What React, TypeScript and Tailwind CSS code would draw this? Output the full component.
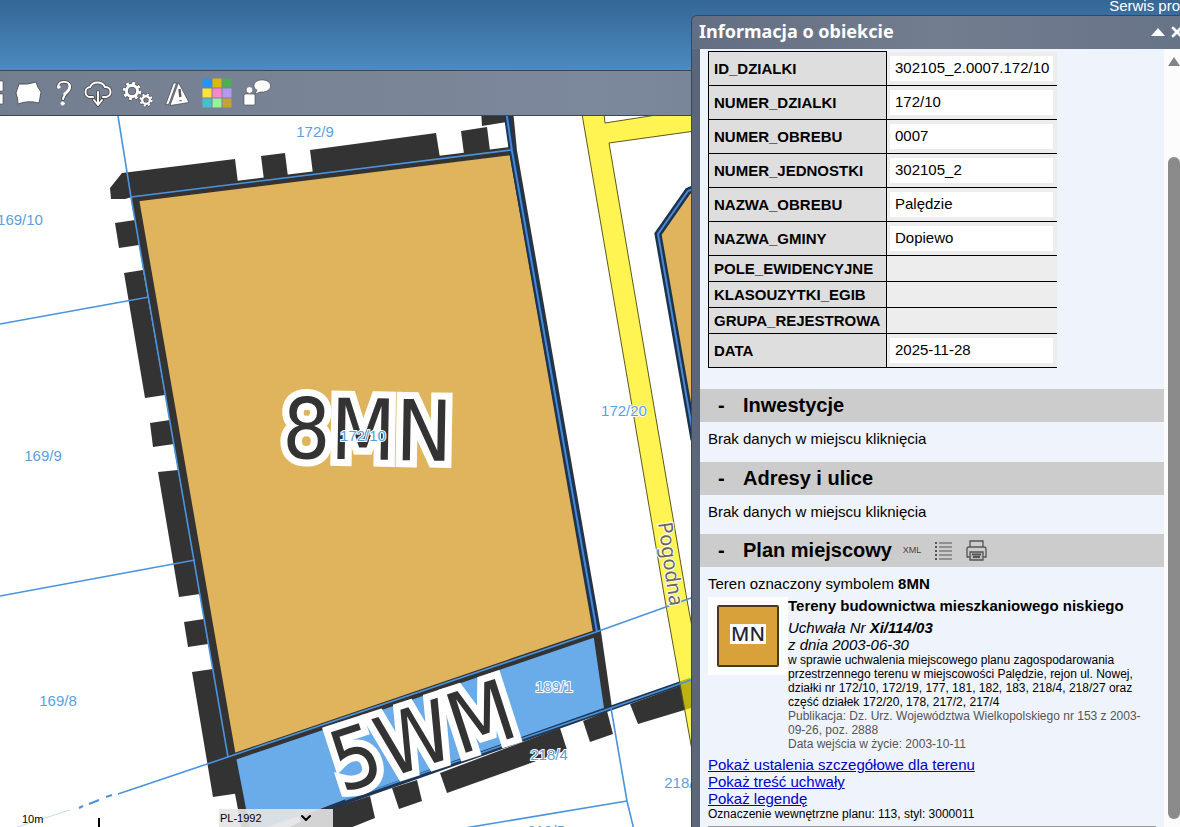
import React from 'react';
import { ChevronDown, X } from 'lucide-react';

interface Attribute {
  name: string;
  value?: string;
}

const attributes: Attribute[] = [
  { name: 'ID_DZIALKI', value: '302105_2.0007.172/10' },
  { name: 'NUMER_DZIALKI', value: '172/10' },
  { name: 'NUMER_OBREBU', value: '0007' },
  { name: 'NUMER_JEDNOSTKI', value: '302105_2' },
  { name: 'NAZWA_OBREBU', value: 'Palędzie' },
  { name: 'NAZWA_GMINY', value: 'Dopiewo' },
  { name: 'POLE_EWIDENCYJNE' },
  { name: 'KLASOUZYTKI_EGIB' },
  { name: 'GRUPA_REJESTROWA' },
  { name: 'DATA', value: '2025-11-28' },
];

const links = ['Pokaż ustalenia szczegółowe dla terenu', 'Pokaż treść uchwały', 'Pokaż legendę'];

// map geometry, in map pixels
const boundaryBlocks = [
  '110,188 122,173 235,159 238,183 132,197 125,199 111,199',
  '261,156 285,153 288,177 264,180',
  '310,150 436,133 440,158 313,174',
  '461,131 487,127 490,151 464,154',
  '481,110 505,110 507,122 482,126',
  '115,223 135,220 139,245 119,248',
  '124,273 143,270 165,395 145,398',
  '150,423 170,420 174,444 153,447',
  '158,472 178,470 200,594 179,597',
  '184,622 204,619 208,644 188,647',
  '192,672 213,669 232,757 240,793 213,797',
  '290,827 320,812 370,796 375,818 345,830 290,830',
  '392,788 417,780 422,801 399,809',
  '440,773 560,728 567,750 447,793',
  '583,721 607,711 613,734 590,742',
  '630,704 691,682 691,708 638,724',
];

const cadastralLines = [
  '118,116 131,197 228,757',
  '131,197 511,150',
  '0,324 149,297',
  '0,596 195,560',
  '118,794 228,757 596,632 691,598',
  '611,708 627,801 634,830',
  '465,828 627,801',
  '345,800 611,708 691,680',
];

const parcelLabels = [
  { x: 315, y: 137, text: '172/9' },
  { x: 20, y: 225, text: '169/10' },
  { x: 43, y: 461, text: '169/9' },
  { x: 58, y: 706, text: '169/8' },
  { x: 363, y: 441, text: '172/10' },
  { x: 624, y: 416, text: '172/20' },
  { x: 554, y: 692, text: '189/1' },
  { x: 549, y: 760, text: '218/4' },
  { x: 683, y: 788, text: '218/3' },
  { x: 546, y: 836, text: '218/5' },
];

const paletteCells = [
  '#2196f3', '#dcb80a', '#4caf50',
  '#ffe33c', '#ff85c8', '#b39af0',
  '#45c0cc', '#98f29a', '#c6a136',
];

const ParcelMap: React.FC = () => (
  <svg
    className="absolute inset-0 h-full w-full"
    viewBox="0 116 1180 711"
    preserveAspectRatio="xMinYMin slice"
    role="img"
    aria-label="Mapa działek"
  >
    <rect x="0" y="116" width="1180" height="711" fill="#fff" />

    {boundaryBlocks.map((points) => (
      <polygon key={points} points={points} fill="#333" />
    ))}

    {/* plan areas */}
    <polygon points="136,199 510,151 596,631 234,757" fill="#e0b45d" />
    <polygon points="234,757 596,633 608,708 245,835" fill="#6aacea" />
    <polyline points="135,199 232,757 246,830" fill="none" stroke="#333" strokeWidth="8" />
    <polyline points="132,198 511,151" fill="none" stroke="#333" strokeWidth="8" />
    <polyline points="509,110 513,151 597,632 608,708" fill="none" stroke="#333" strokeWidth="8" />
    <polyline points="230,758 597,633" fill="none" stroke="#333" strokeWidth="7" />
    <polyline points="300,819 345,802 608,709 691,680" fill="none" stroke="#1f3550" strokeWidth="5" />
    <polyline points="506,110 512,151 597,632" fill="none" stroke="#17365c" strokeWidth="6" />
    <polyline points="506,110 512,151 597,632" fill="none" stroke="#4a88d4" strokeWidth="2" />

    <polygon points="700,186 688,190 657,234 692,430" fill="#e0b45d" />
    <polyline points="700,186 688,191 658,234 694,440" fill="none" stroke="#1c3350" strokeWidth="7" />
    <polyline points="700,186 688,191 658,234 694,440" fill="none" stroke="#4a88d4" strokeWidth="2" />

    {/* road */}
    <polygon
      points="582,114 604,114 605,123 650,116 695,108 695,131 609,143 687,600 700,670 700,795 665,600 631,400"
      fill="#ffef00"
      fillOpacity="0.68"
      stroke="#5d5720"
      strokeWidth="1"
    />

    {cadastralLines.map((points) => (
      <polyline key={points} points={points} fill="none" stroke="#4a94de" strokeWidth="1.6" />
    ))}
    <path d="M79 808l4-2M89 804l10-4M106 797l6-2" stroke="#4a94de" strokeWidth="2" />
    <path d="M17 827L70 810" stroke="#c4dcf2" strokeWidth="1" />

    {/* area symbols */}
    <g
      fill="#333"
      stroke="#fff"
      strokeWidth="14"
      strokeMiterlimit="3"
      paintOrder="stroke"
      fontSize="84"
      fontFamily="'DejaVu Sans Condensed', 'DejaVu Sans', sans-serif"
    >
      <text transform="translate(282 458) rotate(1)">8MN</text>
      <text transform="translate(342 793) rotate(-18)">5WM</text>
    </g>
    <text
      transform="translate(658 523) rotate(82)"
      fontSize="20"
      fontFamily="'Noto Sans', sans-serif"
      fill="#6b6658"
      stroke="#fff"
      strokeWidth="2"
      paintOrder="stroke"
    >
      Pogodna
    </text>

    <g
      fontSize="15"
      fontFamily="'Liberation Sans', Arial, sans-serif"
      textAnchor="middle"
      fill="#5a9fe0"
      stroke="#fff"
      strokeWidth="2"
      paintOrder="stroke"
    >
      {parcelLabels.map(({ x, y, text }) => (
        <text key={text} x={x} y={y}>
          {text}
        </text>
      ))}
    </g>
  </svg>
);

const ToolButton: React.FC<{ label: string; className: string; children: React.ReactNode }> = ({
  label,
  className,
  children,
}) => (
  <button aria-label={label} className={`flex h-full shrink-0 items-center justify-center ${className}`}>
    {children}
  </button>
);

const Toolbar: React.FC = () => (
  <div className="flex h-[46px] items-stretch border-y border-[#3b4658] bg-linear-to-r from-[#747e91] via-[#7c889b] to-[#6c788c]">
    <ToolButton label="Warstwy" className="w-[9px] justify-start">
      <svg width="9" height="26" viewBox="0 0 9 26" fill="#fff" stroke="#444" strokeWidth="0.6">
        <path d="M-2 1h5v10h-5zM-2 14h5v10h-5z" />
      </svg>
    </ToolButton>
    <ToolButton label="Zaznacz obszar" className="w-10">
      <svg width="30" height="28" viewBox="0 0 30 28" fill="#fff" stroke="#444" strokeWidth="0.8">
        <path d="M5 5q9 1 17-2 1 5 5 10l-2 11q-11-3-21 1 0-6-2-11z" strokeLinejoin="round" />
      </svg>
    </ToolButton>
    <ToolButton label="Pomoc" className="w-[30px]">
      <svg width="20" height="28" viewBox="0 0 20 28" fill="none" stroke="#fff" strokeLinecap="round">
        <path d="M4 8C4 1 16 1 16 8c0 5-6 6-7 12" stroke="#444" strokeWidth="3.6" />
        <path d="M4 8C4 1 16 1 16 8c0 5-6 6-7 12" strokeWidth="2" />
        <path d="M15.500 6c1.500 5-3 7-5 9" strokeWidth="2.600" />
        <circle cx="4.6" cy="8" r="1.4" fill="#fff" strokeWidth="1" />
        <circle cx="8.600" cy="24.500" r="1.700" fill="#fff" strokeWidth="0.8" />
      </svg>
    </ToolButton>
    <ToolButton label="Pobierz" className="w-[38px]">
      <svg width="28" height="28" viewBox="0 0 28 28" fill="none" strokeLinecap="round" strokeLinejoin="round">
        <path
          d="M9 18H7a5 5 0 0 1-1-10 8 7 0 0 1 15 0 5 5 0 0 1 1 10h-3M14 13v12M10 21l4 5 4-5"
          stroke="#444"
          strokeWidth="3.6"
        />
        <path
          d="M9 18H7a5 5 0 0 1-1-10 8 7 0 0 1 15 0 5 5 0 0 1 1 10h-3M14 13v12M10 21l4 5 4-5"
          stroke="#fff"
          strokeWidth="2"
        />
      </svg>
    </ToolButton>
    <ToolButton label="Ustawienia" className="w-10">
      <svg width="32" height="28" viewBox="0 0 32 28" fill="none">
        <g stroke="#444">
          <circle cx="11" cy="12" r="5.600" strokeWidth="4.400" />
          <circle cx="11" cy="12" r="8" strokeWidth="3.600" strokeDasharray="3.600 2.683" strokeDashoffset="0.3" />
          <circle cx="25" cy="21" r="3.800" strokeWidth="3.600" />
          <circle cx="25" cy="21" r="5.600" strokeWidth="2.800" strokeDasharray="2.800 1.600" strokeDashoffset="0.3" />
        </g>
        <g stroke="#fff">
          <circle cx="11" cy="12" r="5.600" strokeWidth="3.200" />
          <circle cx="11" cy="12" r="8" strokeWidth="2.600" strokeDasharray="3 3.283" />
          <circle cx="25" cy="21" r="3.800" strokeWidth="2.400" />
          <circle cx="25" cy="21" r="5.600" strokeWidth="2" strokeDasharray="2.200 2.200" />
        </g>
      </svg>
    </ToolButton>
    <ToolButton label="Zgłoszenia" className="w-10">
      <svg width="26" height="28" viewBox="0 0 26 28" fill="#fff" stroke="#444" strokeWidth="0.7">
        <path d="M9.500 4h3L5 25l-3.500 1z" />
        <path d="M14.500 3.500l10.500 20L6 26.500z" strokeLinejoin="round" />
        <path d="M15.500 10l.8 8M16.500 21.200v1" fill="none" stroke="#555" strokeWidth="2.400" />
      </svg>
    </ToolButton>
    <ToolButton label="Kompozycje" className="w-10">
      <svg width="30" height="30" viewBox="0 0 30 30">
        {paletteCells.map((color, i) => (
          <rect key={color} x={(i % 3) * 10 + 0.5} y={Math.floor(i / 3) * 10 + 0.5} width="9" height="9" fill={color} />
        ))}
      </svg>
    </ToolButton>
    <ToolButton label="Kontakt" className="w-10">
      <svg width="28" height="28" viewBox="0 0 28 28" fill="#fff" stroke="#444" strokeWidth="0.6">
        <rect x="1" y="15" width="11" height="11" rx="1.5" />
        <circle cx="6.5" cy="11" r="3.4" />
        <path d="M19 1c5 0 8.500 2.500 8.500 6s-3.500 6-8.500 6q-1 0-2 0l-5 2 2-4c-2-1-3-2.500-3-4 0-3.500 3-6 8-6z" />
      </svg>
    </ToolButton>
  </div>
);

const SectionBar: React.FC<{ title: string; children?: React.ReactNode }> = ({ title, children }) => (
  <div className="flex h-[33px] items-center bg-[#ccc] pb-[2px] pl-[18px]">
    <h2 className="flex text-xl font-bold">
      <span className="w-[25px]">-</span>
      {title}
    </h2>
    {children}
  </div>
);

const PlanActions: React.FC = () => (
  <div className="flex items-center pt-[2px] text-[#555]">
    <button className="ml-[10px] w-5 text-[9px] text-[#444]">XML</button>
    <button aria-label="Lista" className="ml-3">
      <svg width="20" height="20" viewBox="0 0 20 20" stroke="currentColor" strokeWidth="1.2">
        <path d="M5 2h13M5 6h13M5 10h13M5 14h13M5 18h13" />
        <path d="M1 2h2M1 6h2M1 10h2M1 14h2M1 18h2" strokeWidth="2" />
      </svg>
    </button>
    <button aria-label="Drukuj" className="ml-3">
      <svg width="22" height="22" viewBox="0 0 22 22" fill="none" stroke="currentColor" strokeWidth="1.3">
        <path d="M4 7V1h13v6M4 17H1V9q0-2 2-2h15q2 0 2 2v8h-3" />
        <path d="M4 12h13v8H4z" fill="#bbb" />
        <path d="M6 14.5h9M7 17h7" strokeWidth="2" />
      </svg>
    </button>
  </div>
);

const AttributeTable: React.FC = () => (
  <table className="ml-2 w-[349px] border-collapse">
    <tbody>
      {attributes.map(({ name, value }) => (
        <tr key={name} className={value ? 'h-[34px]' : 'h-[26px]'}>
          <th
            scope="row"
            className="w-[178px] border border-black bg-[#dedede] py-0 pl-[5px] text-left leading-[17px] font-bold"
          >
            {name}
          </th>
          <td className="border-b border-black bg-[#ededed] py-0 pr-1 pl-[3px]">
            {value && <div className="h-[25px] bg-white pl-[5px] leading-6">{value}</div>}
          </td>
        </tr>
      ))}
    </tbody>
  </table>
);

const InfoPanel: React.FC = () => (
  <aside className="absolute top-[15px] right-0 bottom-0 flex w-[489px] flex-col overflow-hidden rounded-tl-md border-t border-l border-[#3d4656] bg-[#5c6679]">
    <div className="flex h-[33px] shrink-0 items-center justify-between bg-linear-to-r from-[#636e82] via-[#727d90] to-[#677387] pb-1 pl-[7px]">
      <h1 className="font-['Noto_Sans',sans-serif] text-lg leading-6 font-bold text-white">Informacja o obiekcie</h1>
      <div className="-mr-[5px] flex items-center gap-1 pt-[2px] text-white">
        <button aria-label="Zwiń">
          <svg width="14" height="8" viewBox="0 0 14 8" fill="currentColor">
            <path d="M7 0l7 8H0z" />
          </svg>
        </button>
        <button aria-label="Zamknij">
          <X className="size-4" strokeWidth={4} />
        </button>
      </div>
    </div>

    <div className="ml-2 flex min-h-0 flex-1 bg-[#eff3fb]">
      <div className="min-w-0 flex-1 overflow-hidden pt-[2px] text-[15px] leading-[17px] text-black">
        <AttributeTable />

        <div className="mt-[21px]">
          <SectionBar title="Inwestycje" />
          <p className="h-10 px-2 py-2">Brak danych w miejscu kliknięcia</p>
          <SectionBar title="Adresy i ulice" />
          <p className="h-[39px] px-2 py-2">Brak danych w miejscu kliknięcia</p>
          <SectionBar title="Plan miejscowy">
            <PlanActions />
          </SectionBar>
        </div>

        <div className="pt-2 pl-2">
          <p>
            Teren oznaczony symbolem <b>8MN</b>
          </p>
          <div className="mt-[5px] flex items-start">
            <div className="flex h-[78px] w-20 shrink-0 justify-center bg-white pt-2">
              <div className="flex size-[62px] items-center justify-center rounded-[2px] border-2 border-[#4a3818] bg-[#d9a139] pb-1">
                <span className="bg-white px-px font-['Noto_Sans',sans-serif] text-xl leading-5 font-medium text-[#223]">
                  MN
                </span>
              </div>
            </div>
            <div className="pr-2">
              <h3 className="font-bold">Tereny budownictwa mieszkaniowego niskiego</h3>
              <p className="mt-[5px] italic">
                Uchwała Nr <b>Xi/114/03</b>
                <br />z dnia 2003-06-30
              </p>
              <p className="text-xs leading-[14px]">
                w sprawie uchwalenia miejscowego planu zagospodarowania przestrzennego terenu w miejscowości Palędzie,
                rejon ul. Nowej, działki nr 172/10, 172/19, 177, 181, 182, 183, 218/4, 218/27 oraz część działek 172/20,
                178, 217/2, 217/4
              </p>
              <p className="text-xs leading-[14px] text-[#555]">
                Publikacja: Dz. Urz. Województwa Wielkopolskiego nr 153 z 2003-09-26, poz. 2888
                <br />
                Data wejścia w życie: 2003-10-11
              </p>
            </div>
          </div>
          <div className="mt-[5px] flex flex-col items-start">
            {links.map((link) => (
              <a key={link} href="#" className="text-[#00c] underline">
                {link}
              </a>
            ))}
          </div>
          <p className="text-xs leading-[14px]">Oznaczenie wewnętrzne planu: 113, styl: 3000011</p>
          <hr className="mt-[5px] mr-2 border-t-2 border-[#999]" />
        </div>
      </div>

      {/* scroll track */}
      <div className="flex w-4 shrink-0 flex-col overflow-hidden bg-[#fcfcfc] pt-2 pb-2 pl-1">
        <svg width="12" height="9" viewBox="0 0 12 9" fill="#858585">
          <path d="M6 0l6 9H0z" />
        </svg>
        <div className="mt-[91px] flex-1 rounded-[6px] bg-[#8b8b8b]" />
      </div>
    </div>
  </aside>
);

const App: React.FC = () => {
  return (
    <div className="relative flex h-screen flex-col overflow-hidden bg-white font-['Liberation_Sans',Arial,sans-serif]">
      <header className="flex h-[70px] shrink-0 justify-end bg-linear-to-b from-[#346796] to-[#4c8ac0]">
        <a href="#" className="text-[15px] leading-3 text-white">
          Serwis pro
        </a>
      </header>
      <Toolbar />

      <main className="relative min-h-0 flex-1">
        <ParcelMap />
        <div className="absolute bottom-0 left-0 flex items-end text-[11px] leading-3 text-black">
          <span className="w-[76px] pb-[2px] pl-[22px]">10m</span>
          <span className="ml-[22px] h-[9px] w-[2px] bg-black" />
          <div className="relative ml-[119px] flex h-[18px] w-[114px] items-center bg-[#e4e4e4]/90">
            <select aria-label="Układ współrzędnych" className="w-full appearance-none pl-px leading-4">
              <option>PL-1992</option>
            </select>
            <ChevronDown className="pointer-events-none absolute right-[19px] size-4" strokeWidth={3} />
          </div>
        </div>
      </main>

      <InfoPanel />
    </div>
  );
};

export default App;
